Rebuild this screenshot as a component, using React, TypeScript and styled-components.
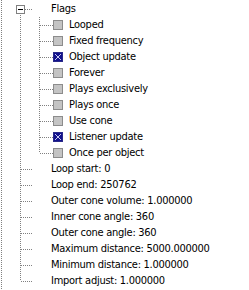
import React from 'react'
import styled, { createGlobalStyle } from 'styled-components'

type TreeNode = {
  label: string
  checked?: boolean
  children?: TreeNode[]
}

type FlatRow = {
  node: TreeNode
  level: number
  first: boolean
  last: boolean
  guides: boolean[]
}

const tree: TreeNode[] = [
  {
    label: 'Flags',
    children: [
      { label: 'Looped', checked: false },
      { label: 'Fixed frequency', checked: false },
      { label: 'Object update', checked: true },
      { label: 'Forever', checked: false },
      { label: 'Plays exclusively', checked: false },
      { label: 'Plays once', checked: false },
      { label: 'Use cone', checked: false },
      { label: 'Listener update', checked: true },
      { label: 'Once per object', checked: false },
    ],
  },
  { label: 'Loop start: 0' },
  { label: 'Loop end: 250762' },
  { label: 'Outer cone volume: 1.000000' },
  { label: 'Inner cone angle: 360' },
  { label: 'Outer cone angle: 360' },
  { label: 'Maximum distance: 5000.000000' },
  { label: 'Minimum distance: 1.000000' },
  { label: 'Import adjust: 1.000000' },
]

function flatten(nodes: TreeNode[], level: number, guides: boolean[], out: FlatRow[]) {
  nodes.forEach((node, i) => {
    const last = i == nodes.length - 1
    out.push({ node, level, first: level == 1 && i == 0, last, guides })
    if (node.children) flatten(node.children, level + 1, [...guides, !last], out)
  })
  return out
}

const rows = flatten(tree, 1, [false], [])

const vdots = 'repeating-linear-gradient(to bottom, #808080 0 1px, transparent 1px 2px)'
const hdots = 'repeating-linear-gradient(to right, #808080 0 1px, transparent 1px 2px)'

const GlobalStyle = createGlobalStyle`
  html, body {
    margin: 0;
    padding: 0;
    background: #fff;
  }
`

const Tree = styled.div`
  width: 249px;
  height: 290px;
  overflow: hidden;
  box-sizing: border-box;
  padding-top: 1px;
  background: #fff ${vdots} no-repeat 1px 0 / 1px 100%;
  font-family: 'DejaVu Sans Condensed', 'DejaVu Sans', sans-serif;
  font-size: 11px;
  letter-spacing: -0.27px;
  color: #000;
`

const Row = styled.div`
  display: flex;
  align-items: center;
  height: 16px;
  white-space: nowrap;
`

const Guide = styled.div<{ $on: boolean; $first?: boolean }>`
  flex: none;
  width: ${(p) => (p.$first ? 16 : 19)}px;
  height: 16px;
  background-repeat: no-repeat;
  background-image: ${(p) => (p.$on ? vdots : 'none')};
  background-size: 1px 16px;
  background-position: 4px 0;
`

const Connector = styled.div<{ $up: boolean; $down: boolean; $stub: number }>`
  flex: none;
  display: flex;
  align-items: flex-start;
  width: 18px;
  height: 16px;
  background-repeat: no-repeat;
  background-image: ${vdots}, ${vdots}, ${hdots};
  background-size:
    1px ${(p) => (p.$up ? 8 : 0)}px,
    1px ${(p) => (p.$down ? 8 : 0)}px,
    ${(p) => p.$stub}px 1px;
  background-position:
    4px 0,
    4px 8px,
    5px 8px;
`

const Expander = styled.div`
  box-sizing: border-box;
  width: 9px;
  height: 9px;
  margin-top: 4px;
  border: 1px solid #808080;
  background: #fff;
  display: flex;
  align-items: center;
  justify-content: center;

  &::before {
    content: '';
    width: 5px;
    height: 1px;
    background: #000;
  }
`

const Label = styled.span<{ $indent: number }>`
  margin-left: ${(p) => p.$indent}px;
  line-height: 16px;
`

const Box = styled.svg`
  flex: none;
  display: block;
`

function CheckBox({ checked }: { checked: boolean }) {
  return (
    <Box width="10" height="10" viewBox="0 0 10 10" shapeRendering="crispEdges">
      {checked ? (
        <>
          <rect x="0.5" y="0.5" width="9" height="9" fill="#12128c" stroke="#2a2a8a" />
          <path d="M2 2h1v1h1v1h2v-1h1v-1h1v1h-1v1h-1v2h1v1h1v1h-1v-1h-1v-1h-2v1h-1v1h-1v-1h1v-1h1v-2h-1v-1h-1z" fill="#c8c8f0" />
        </>
      ) : (
        <rect x="0.5" y="0.5" width="9" height="9" fill="#c4c4c4" stroke="#8c8c8c" />
      )}
    </Box>
  )
}

export default function App() {
  return (
    <>
      <GlobalStyle />
      <Tree>
        {rows.map((r, i) => {
          const hasChildren = !!r.node.children
          return (
            <Row key={i}>
              {r.guides.map((on, g) => (
                <Guide key={g} $on={on && g > 0} $first={g == 0} />
              ))}
              <Connector $up={!r.first} $down={!r.last} $stub={r.level == 1 ? 11 : 13}>
                {hasChildren && <Expander />}
              </Connector>
              {r.node.checked !== undefined ? (
                <>
                  <CheckBox checked={r.node.checked} />
                  <Label $indent={6}>{r.node.label}</Label>
                </>
              ) : (
                <Label $indent={17}>{r.node.label}</Label>
              )}
            </Row>
          )
        })}
      </Tree>
    </>
  )
}
